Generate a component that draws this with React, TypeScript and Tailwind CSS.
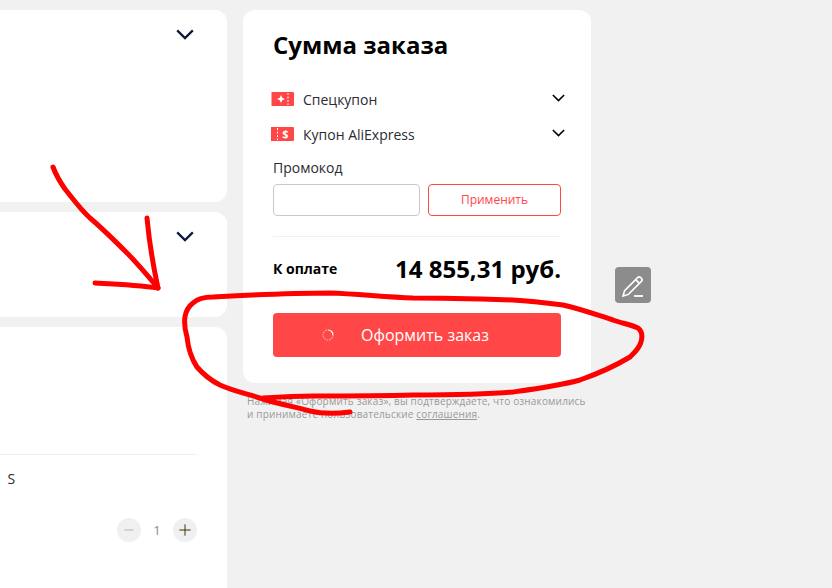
import React from 'react';
import { Minus, Plus } from 'lucide-react';

const Chevron = ({ width, className }: { width: number; className?: string }) => (
  <svg width={width} height={width * 0.62} viewBox="0 0 16 10" fill="none" stroke="currentColor" strokeWidth="2" className={className}>
    <path d="M1 1.2l7 7 7-7" />
  </svg>
);

const CouponRow = ({ icon, label }: { icon: React.ReactNode; label: string }) => (
  <div className="flex h-[35px] items-center">
    <div className="w-[30px] shrink-0">{icon}</div>
    <span className="flex-1 text-[14px] text-[#2b2b33]">{label}</span>
    <Chevron width={13} className="mb-[2px] mr-[-4px] text-black" />
  </div>
);

const SpecialIcon = () => (
  <svg width="23" height="14" viewBox="0 0 23 14" className="ml-[-2px] mb-[2px]">
    <path d="M0.5 0h21.5a1 1 0 0 1 1 1v12a1 1 0 0 1-1 1H0.5z" fill="#ff4747" />
    <path d="M17 1v12" stroke="#fff" strokeDasharray="2 1.5" />
    <path d="M10 3l1.2 2.8 2.8 1.2-2.8 1.2-1.2 2.8-1.2-2.8-2.8-1.2 2.8-1.2z" fill="#fff" />
  </svg>
);

const DollarIcon = () => (
  <svg width="23" height="14" viewBox="0 0 23 14" className="ml-[-2px] mb-[2px]">
    <path d="M0 0h22a1 1 0 0 1 1 1v12a1 1 0 0 1-1 1H0z" fill="#ff4747" />
    <path d="M6.5 1v12" stroke="#fff" strokeDasharray="2 1.5" />
    <text x="14.5" y="11" textAnchor="middle" fontSize="11" fontWeight="700" fill="#fff" fontFamily="'Open Sans', sans-serif">$</text>
  </svg>
);

const Spinner = () => (
  <svg width="12" height="12" viewBox="0 0 12 12" fill="none">
    <path d="M6 1a5 5 0 0 1 5 5" stroke="#fff" strokeWidth="1.2" />
    <path d="M11 6a5 5 0 1 1-5-5" stroke="#fff" strokeOpacity="0.55" strokeWidth="1.2" strokeDasharray="1.5 1" />
  </svg>
);

export default function App() {
  return (
    <div className="relative flex h-[588px] w-[832px] gap-4 overflow-hidden bg-[#f1f1f1] pt-[10px] font-['Open_Sans',sans-serif]">
      <div className="flex w-[227px] shrink-0 flex-col gap-[10px]">
        <div className="flex h-[192px] justify-end rounded-r-xl bg-white pr-[33px] pt-[19px]">
          <Chevron width={18} className="text-[#0a1a3a]" />
        </div>
        <div className="flex h-[105px] justify-end rounded-r-xl bg-white pr-[33px] pt-[19px]">
          <Chevron width={18} className="text-[#0a1a3a]" />
        </div>
        <div className="flex-1 rounded-tr-xl bg-white pr-[30px] pt-[127px]">
          <div className="border-t border-[#f0f0f0] pt-[14px] text-[14px] leading-[20px] text-[#2b2b33]">
            <div className="ml-[-7px] [word-spacing:3px]">я S</div>
            <div className="mt-[29px] flex items-center justify-end">
              <div className="flex h-6 w-6 items-center justify-center rounded-full bg-[#f0f0f0]">
                <Minus size={14} strokeWidth={2.4} className="text-[#c8c8c8]" />
              </div>
              <span className="w-[32px] text-center text-[13px] text-[#8a8a8a]">1</span>
              <div className="flex h-6 w-6 items-center justify-center rounded-full bg-[#f0f0f0]">
                <Plus size={18} strokeWidth={1.3} className="text-[#3a3000]" />
              </div>
            </div>
          </div>
        </div>
      </div>

      <div className="w-[348px] shrink-0">
        <div className="h-[373px] rounded-xl bg-white px-[30px] pt-[17px]">
          <h1 className="text-[24px] font-bold leading-[36px] text-black">Сумма заказа</h1>
          <div className="mt-[19px]">
            <CouponRow icon={<SpecialIcon />} label="Спецкупон" />
            <CouponRow icon={<DollarIcon />} label="Купон AliExpress" />
          </div>
          <div className="mt-[6px] text-[14px] leading-[20px] text-[#2b2b33]">Промокод</div>
          <div className="mt-[6px] flex gap-2">
            <input className="h-8 w-[147px] rounded border border-[#c8c8c8] bg-white" />
            <button className="h-8 w-[133px] rounded border border-[#ff4747] text-[12px] text-[#ff4747]">Применить</button>
          </div>
          <div className="mt-[20px] flex h-[64px] items-center justify-between border-t border-[#f0f0f0]">
            <span className="text-[14px] font-bold text-black">К оплате</span>
            <span className="text-[24px] font-bold leading-[32px] text-black">14 855,31 руб.</span>
          </div>
          <button className="relative mt-[13px] flex h-11 w-[288px] items-center justify-center rounded bg-[#ff4747] text-[16px] font-normal text-white">
            <span className="absolute left-[49px] top-[16px]"><Spinner /></span>
            <span className="ml-[16px]">Оформить заказ</span>
          </button>
        </div>
        <p className="mt-[12px] px-1 text-[10px] leading-[13px] tracking-[0.17px] text-[#999]">
          Нажимая «Оформить заказ», вы подтверждаете, что ознакомились
          <br />
          и принимаете пользовательские <span className="underline">соглашения</span>.
        </p>
      </div>

      <div className="absolute left-[615px] top-[267px] flex h-9 w-9 items-center justify-center rounded bg-[#8c8c8c]">
        <svg width="26" height="26" viewBox="0 0 26 26" fill="none" stroke="#fff" strokeWidth="1.6">
          <path d="M3 24l1.6-5.4L17.6 5.6a2.2 2.2 0 0 1 3.1 0l.7.7a2.2 2.2 0 0 1 0 3.1L8.4 22.4z" />
          <path d="M15.6 7.6l3.8 3.8" />
          <path d="M14 24h9" strokeWidth="1.8" />
        </svg>
      </div>

      {/* hand-drawn red marks over the page */}
      <svg className="pointer-events-none absolute left-0 top-0 blur-[0.4px]" width="832" height="588" fill="none" stroke="#ff0000" strokeWidth="5" strokeLinecap="round" strokeLinejoin="round">
        <path d="M53 167C56 175 60 182 65 189C73 199 81 210 90 218C103 229 115 241 127 253C138 264 148 276 158 288" />
        <path d="M147 218C149 240 153 265 158 288C138 285 115 284 95 283" />
        <path d="M350 412C335 414 322 414 310 411C295 407 279 404 263 399C248 394 233 391 220 385C210 380 203 374 197 367C191 358 188 347 187 337C185 330 184 323 185 317C186 310 189 306 193 303C198 298 204 297 213 297C250 295 290 293 330 293C358 294 385 297 413 298C447 298 480 299 513 300C530 301 547 303 563 305C581 309 597 315 613 320C621 323 632 325 638 328C642 331 643 335 641 342C639 349 634 353 630 357C615 366 597 374 580 380C558 386 535 389 513 392C480 395 447 395 413 395C380 396 346 396 313 396C296 396 279 397 263 398" />
      </svg>
    </div>
  );
}
